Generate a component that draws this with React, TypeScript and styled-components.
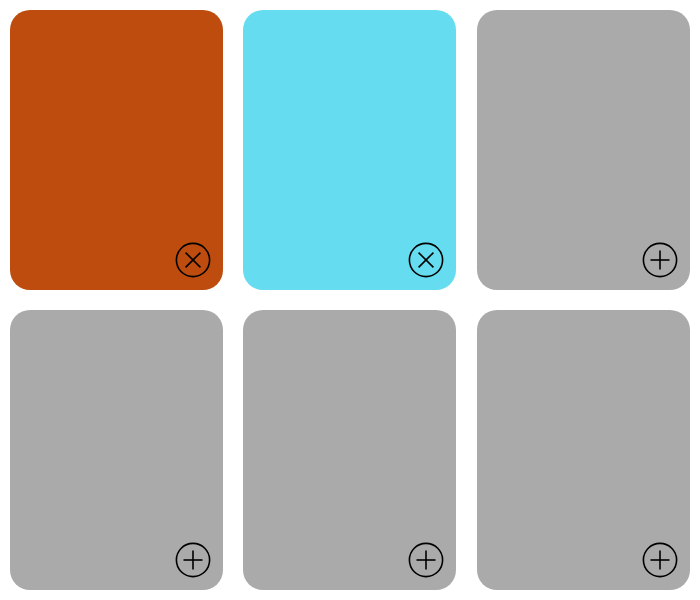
import { createGlobalStyle } from "styled-components";
import styled from "styled-components";

const GlobalStyle = createGlobalStyle`
  html, body {
    margin: 0;
    padding: 0;
    background: #fff;
  }
`;

const slots = [
  { id: 1, color: "#bd4c0e", selected: true },
  { id: 2, color: "#66dcf0", selected: true },
  { id: 3, color: "#aaaaaa", selected: false },
  { id: 4, color: "#aaaaaa", selected: false },
  { id: 5, color: "#aaaaaa", selected: false },
  { id: 6, color: "#aaaaaa", selected: false },
];

//Toggle icon, the plus is turned 45deg when the slot is taken
function ToggleIcon({ selected }: { selected: boolean }) {
  return (
    <svg width="36" height="36" viewBox="0 0 36 36" fill="none" stroke="#000">
      <circle cx="18" cy="18" r="16.6" strokeWidth="1.6" />
      <g
        strokeWidth="1.6"
        transform={selected ? "rotate(45 18 18)" : undefined}
      >
        <line x1={selected ? 7.5 : 8.5} y1="18" x2={selected ? 28.5 : 27.5} y2="18" />
        <line x1="18" y1={selected ? 7.5 : 8.5} x2="18" y2={selected ? 28.5 : 27.5} />
      </g>
    </svg>
  );
}

function App() {
  return (
    <>
      <GlobalStyle />
      <Grid>
        {slots.map((slot) => (
          <Card key={slot.id} color={slot.color}>
            <ToggleButton>
              <ToggleIcon selected={slot.selected} />
            </ToggleButton>
          </Card>
        ))}
      </Grid>
    </>
  );
}

const Grid = styled.div`
  display: grid;
  grid-template-columns: repeat(3, 213px);
  grid-auto-rows: 280px;
  gap: 20px 20.4px;
  padding: 10px;
`;

const Card = styled.div<{ color: string }>`
  display: flex;
  align-items: flex-end;
  justify-content: flex-end;
  padding: 12px;
  border-radius: 20px;
  background: ${(props) => props.color};
`;

const ToggleButton = styled.div`
  display: flex;
  width: 36px;
  height: 36px;
`;

export default App;
